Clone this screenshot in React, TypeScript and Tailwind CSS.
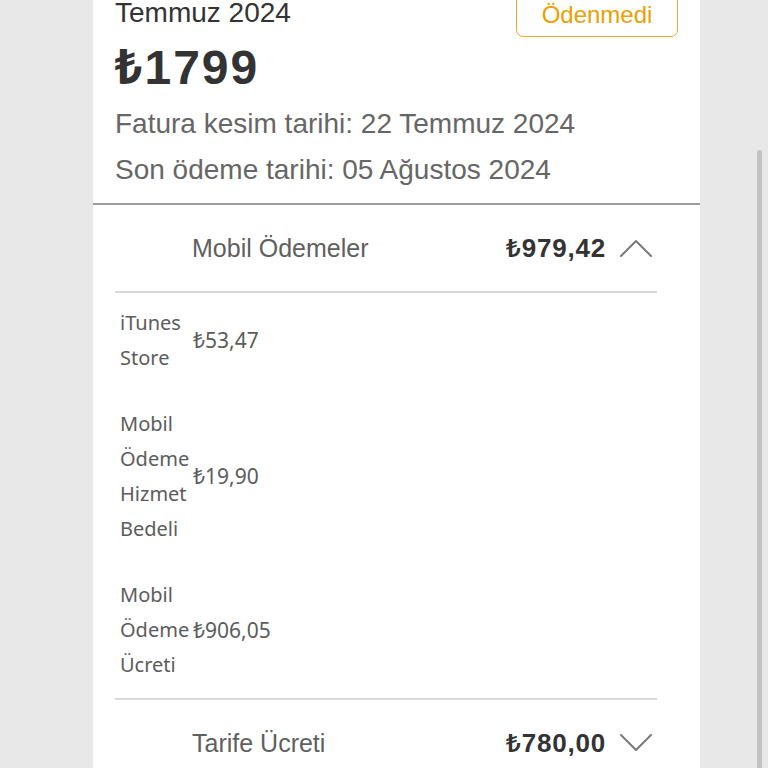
type LineItem = {
	label: string;
	amount: string;
};

const MOBILE_ITEMS: LineItem[] = [
	{ label: "iTunes Store", amount: "₺53,47" },
	{ label: "Mobil Ödeme Hizmet Bedeli", amount: "₺19,90" },
	{ label: "Mobil Ödeme Ücreti", amount: "₺906,05" },
];

function Chevron({ up }: { up: boolean }) {
	return (
		<svg width="32" height="18" viewBox="0 0 32 18" fill="none" className="shrink-0">
			<polyline
				points={up ? "1,17 16,2 31,17" : "1,1 16,16 31,1"}
				stroke="#7a7a7a"
				strokeWidth="2"
				strokeLinecap="round"
				strokeLinejoin="round"
			/>
		</svg>
	);
}

function SectionHeader({ title, amount, open }: { title: string; amount: string; open: boolean }) {
	return (
		<div className="flex h-[86px] items-center pl-[77px] pr-[5px]">
			<span className="flex-1 text-[25px] leading-[30px] text-[#5f5f5f]">{title}</span>
			<span className="text-[26px] leading-[30px] font-semibold text-[#333333] tracking-[0.8px]">
				{amount}
			</span>
			<span className="ml-[14px]">
				<Chevron up={open} />
			</span>
		</div>
	);
}

export default function App() {
	return (
		<div
			className="relative h-[768px] w-[768px] overflow-hidden bg-[#e8e8e8]"
			style={{ fontFamily: '"Liberation Sans", "Noto Sans", sans-serif' }}
		>
			<div className="ml-[93px] -mt-[4px] w-[607px] bg-white">
				<div className="pl-[22px] pr-[22px] pb-[10px]">
					<div className="flex items-start justify-between">
						<span className="text-[28px] leading-[34px] text-[#333333]">Temmuz 2024</span>
						<div className="-mt-[7px] flex h-[48px] w-[162px] items-end justify-center rounded-[7px] border-[1.5px] border-[#eeab2a] pb-[8px]">
							<span className="text-[24px] leading-[26px] text-[#e9a000]">Ödenmedi</span>
						</div>
					</div>
					<div className="mt-[3px] text-[48px] leading-[56px] font-bold tracking-[2px] text-[#333333]">
						₺1799
					</div>
					<div className="mt-[5px] text-[28px] leading-[46px] text-[#666666]">
						Fatura kesim tarihi: 22 Temmuz 2024
					</div>
					<div className="text-[28px] leading-[46px] text-[#666666]">
						Son ödeme tarihi: 05 Ağustos 2024
					</div>
				</div>
				<div className="h-[2px] bg-[#9c9c9c]" />

				<div className="ml-[22px] mr-[43px]">
					<SectionHeader title="Mobil Ödemeler" amount="₺979,42" open />
					<div className="h-[2px] bg-[#d8d8d8]" />
					<div
						className="flex flex-col gap-[30px] pl-[5px] pt-[12px] pb-[15px]"
						style={{ fontFamily: '"Noto Sans", "DejaVu Sans", sans-serif' }}
					>
						{MOBILE_ITEMS.map((item) => (
							<div key={item.label} className="flex items-center">
								<div className="w-[73px] text-[20px] leading-[35.3px] text-[#5c5c5c]">
									{item.label.split(" ").map((word) => (
										<div key={word}>{word}</div>
									))}
								</div>
								<span className="text-[21px] leading-[36px] text-[#5c5c5c]">{item.amount}</span>
							</div>
						))}
					</div>
					<div className="h-[2px] bg-[#d8d8d8]" />
					<SectionHeader title="Tarife Ücreti" amount="₺780,00" open={false} />
				</div>
			</div>

			<div className="absolute left-[757px] top-[150px] bottom-0 w-[5px] rounded-t-full bg-[#c3c3c3]" />
		</div>
	);
}
